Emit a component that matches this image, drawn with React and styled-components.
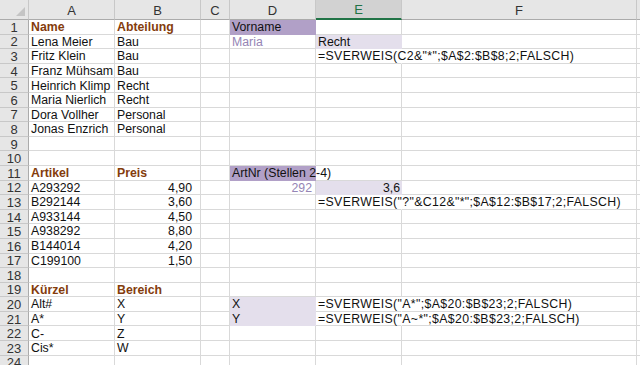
import React from "react";
import styled, { createGlobalStyle, css } from "styled-components";

const Global = createGlobalStyle`
  html, body { margin: 0; padding: 0; background: #fff; }
  body { font-family: "Liberation Sans", Arial, sans-serif; overflow: hidden; }
`;

const GRID = "#d9d9d9";
const HEAD_BG = "#e6e6e6";
const PURPLE = "#b1a0c7";
const LAVENDER = "#e4dfec";
const BROWN = "#843c0c";
const SOFT = "#9585b5";

const Sheet = styled.div`
  display: grid;
  grid-template-columns: 29px 86px 86px 29px 86px 86px 235px 1fr;
  grid-template-rows: 20px;
  grid-auto-rows: 14.6px;
  width: 640px;
  height: 365px;
  overflow: hidden;
  font-size: 12.3px;
`;

const Corner = styled.div`
  position: relative;
  background: ${HEAD_BG};
  border-right: 1px solid #c8c8c8;
  border-bottom: 1px solid #ababab;
  box-sizing: border-box;
  &::after {
    content: "";
    position: absolute;
    right: 3px;
    bottom: 3px;
    border-style: solid;
    border-width: 0 0 9px 9px;
    border-color: transparent transparent #c4c4c4 transparent;
  }
`;

const ColHead = styled.div`
  display: flex;
  align-items: center;
  justify-content: center;
  box-sizing: border-box;
  background: ${(p) => (p.$active ? "#d2d2d2" : HEAD_BG)};
  color: ${(p) => (p.$active ? "#217346" : "#333")};
  border-right: 1px solid #c8c8c8;
  border-bottom: ${(p) => (p.$active ? "2px solid #217346" : "1px solid #ababab")};
  font-size: 13px;
  padding-top: 1px;
`;

const RowHead = styled.div`
  display: flex;
  align-items: center;
  justify-content: center;
  box-sizing: border-box;
  background: ${HEAD_BG};
  color: #333;
  border-right: 1px solid #ababab;
  border-bottom: 1px solid #c8c8c8;
  font-size: 13px;
  padding-top: 1px;
`;

const Cell = styled.div`
  display: flex;
  align-items: center;
  box-sizing: border-box;
  white-space: nowrap;
  padding: 1px 2px 0;
  line-height: 1;
  color: ${(p) => p.$color || "#111"};
  font-weight: ${(p) => (p.$bold ? 700 : 400)};
  justify-content: ${(p) => (p.$right ? "flex-end" : "flex-start")};
  overflow-x: ${(p) => (p.$spill ? "visible" : "clip")};
  overflow-y: visible;
  border-bottom: 1px solid ${(p) => p.$fill || GRID};
  border-right: 1px solid ${(p) => p.$fill || GRID};
  background: ${(p) => p.$fill || "transparent"};
  ${(p) =>
    p.$spill &&
    css`
      border-right-color: transparent;
      position: relative;
      z-index: 1;
    `}
  ${(p) =>
    p.$formula &&
    css`
      letter-spacing: 0.36px;
    `}
  ${(p) =>
    p.$padRight &&
    css`
      padding-right: ${p.$padRight}px;
    `}
`;

const columns = ["A", "B", "C", "D", "E", "F", ""];

// sheet content, keyed by row number and column letter
const data = {
  1: { A: { t: "Name", bold: true, color: BROWN }, B: { t: "Abteilung", bold: true, color: BROWN }, D: { t: "Vorname", fill: PURPLE } },
  2: { A: { t: "Lena Meier" }, B: { t: "Bau" }, D: { t: "Maria", color: SOFT }, E: { t: "Recht", fill: LAVENDER } },
  3: { A: { t: "Fritz Klein" }, B: { t: "Bau" }, E: { t: '=SVERWEIS(C2&"*";$A$2:$B$8;2;FALSCH)', spill: true, formula: true } },
  4: { A: { t: "Franz Mühsam" }, B: { t: "Bau" } },
  5: { A: { t: "Heinrich Klimp" }, B: { t: "Recht" } },
  6: { A: { t: "Maria Nierlich" }, B: { t: "Recht" } },
  7: { A: { t: "Dora Vollher" }, B: { t: "Personal" } },
  8: { A: { t: "Jonas Enzrich" }, B: { t: "Personal" } },
  11: { A: { t: "Artikel", bold: true, color: BROWN }, B: { t: "Preis", bold: true, color: BROWN }, D: { t: "ArtNr (Stellen 2-4)", fill: PURPLE, spill: true } },
  12: { A: { t: "A293292" }, B: { t: "4,90", right: true, pad: 8 }, D: { t: "292", right: true, color: SOFT, pad: 3 }, E: { t: "3,6", right: true, fill: LAVENDER, pad: 1 } },
  13: { A: { t: "B292144" }, B: { t: "3,60", right: true, pad: 8 }, E: { t: '=SVERWEIS("?"&C12&"*";$A$12:$B$17;2;FALSCH)', spill: true, formula: true } },
  14: { A: { t: "A933144" }, B: { t: "4,50", right: true, pad: 8 } },
  15: { A: { t: "A938292" }, B: { t: "8,80", right: true, pad: 8 } },
  16: { A: { t: "B144014" }, B: { t: "4,20", right: true, pad: 8 } },
  17: { A: { t: "C199100" }, B: { t: "1,50", right: true, pad: 8 } },
  19: { A: { t: "Kürzel", bold: true, color: BROWN }, B: { t: "Bereich", bold: true, color: BROWN } },
  20: { A: { t: "Alt#" }, B: { t: "X" }, D: { t: "X", fill: LAVENDER }, E: { t: '=SVERWEIS("A*";$A$20:$B$23;2;FALSCH)', spill: true, formula: true } },
  21: { A: { t: "A*" }, B: { t: "Y" }, D: { t: "Y", fill: LAVENDER }, E: { t: '=SVERWEIS("A~*";$A$20:$B$23;2;FALSCH)', spill: true, formula: true } },
  22: { A: { t: "C-" }, B: { t: "Z" } },
  23: { A: { t: "Cis*" }, B: { t: "W" } },
};

const rows = Array.from({ length: 24 }, (_, i) => i + 1);

export default function App() {
  return (
    <>
      <Global />
      <Sheet>
        <Corner />
        {columns.map((c, i) => (
          <ColHead key={"h" + i} $active={c === "E"}>
            {c}
          </ColHead>
        ))}
        {rows.map((r) => (
          <React.Fragment key={r}>
            <RowHead>{r}</RowHead>
            {columns.map((c, i) => {
              const v = (data[r] && data[r][c]) || null;
              return (
                <Cell
                  key={r + "-" + i}
                  $bold={v && v.bold}
                  $color={v && v.color}
                  $fill={v && v.fill}
                  $right={v && v.right}
                  $spill={v && v.spill}
                  $formula={v && v.formula}
                  $padRight={v && v.pad}
                >
                  {v ? v.t : null}
                </Cell>
              );
            })}
          </React.Fragment>
        ))}
      </Sheet>
    </>
  );
}
